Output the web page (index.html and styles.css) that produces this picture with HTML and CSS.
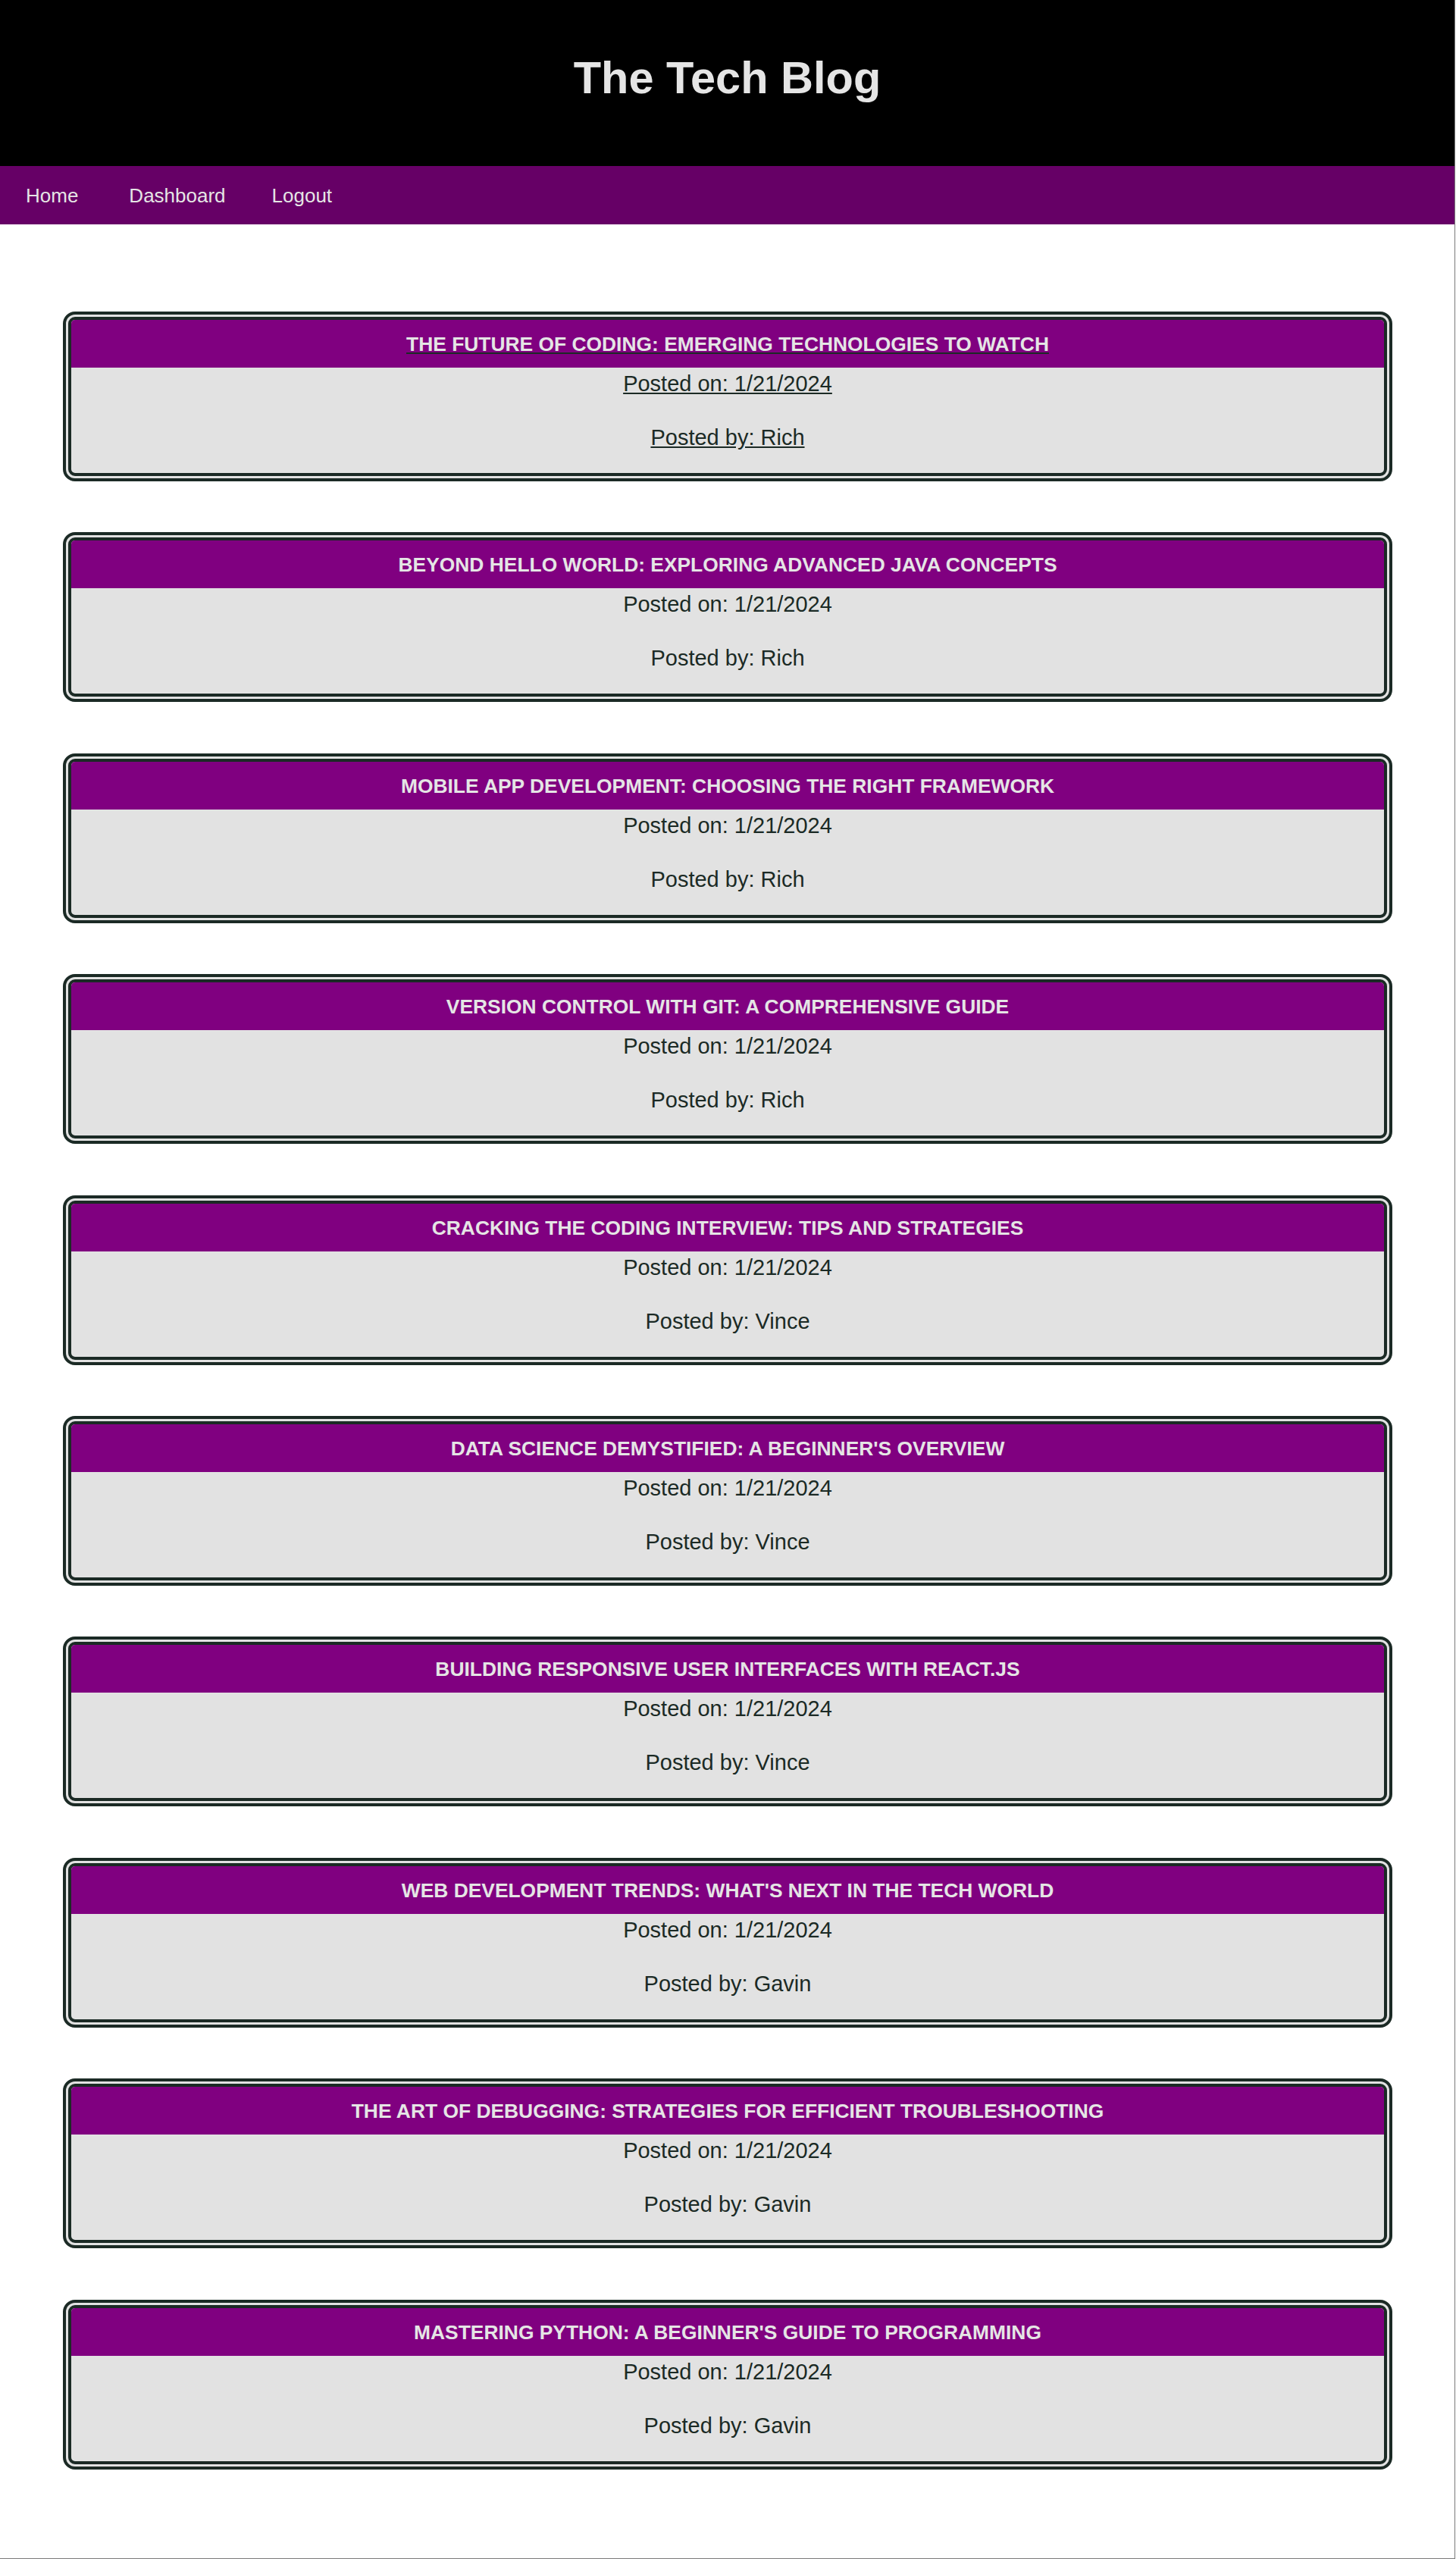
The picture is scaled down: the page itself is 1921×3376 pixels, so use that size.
FILE: index.html
```html
<!DOCTYPE html>
<html lang="en">
<head>
<meta charset="utf-8">
<title>The Tech Blog</title>
<link rel="stylesheet" href="styles.css">
</head>
<body>
<div class="page">
  <header class="site-header">
    <h1 class="site-title">The Tech Blog</h1>
  </header>
  <nav class="site-nav">
    <a class="nav-link nav-home" href="#">Home</a>
    <a class="nav-link nav-dash" href="#">Dashboard</a>
    <a class="nav-link nav-logout" href="#">Logout</a>
  </nav>
  <main class="posts">
    <a class="post-card is-hover" href="#">
      <h2 class="post-title">The Future of Coding: Emerging Technologies to Watch</h2>
      <div class="post-body"><p class="post-date">Posted on: 1/21/2024</p><p class="post-author">Posted by: Rich</p></div>
    </a>
    <a class="post-card" href="#">
      <h2 class="post-title">Beyond Hello World: Exploring Advanced Java Concepts</h2>
      <div class="post-body"><p class="post-date">Posted on: 1/21/2024</p><p class="post-author">Posted by: Rich</p></div>
    </a>
    <a class="post-card" href="#">
      <h2 class="post-title">Mobile App Development: Choosing the Right Framework</h2>
      <div class="post-body"><p class="post-date">Posted on: 1/21/2024</p><p class="post-author">Posted by: Rich</p></div>
    </a>
    <a class="post-card" href="#">
      <h2 class="post-title">Version Control with Git: A Comprehensive Guide</h2>
      <div class="post-body"><p class="post-date">Posted on: 1/21/2024</p><p class="post-author">Posted by: Rich</p></div>
    </a>
    <a class="post-card" href="#">
      <h2 class="post-title">Cracking the Coding Interview: Tips and Strategies</h2>
      <div class="post-body"><p class="post-date">Posted on: 1/21/2024</p><p class="post-author">Posted by: Vince</p></div>
    </a>
    <a class="post-card" href="#">
      <h2 class="post-title">Data Science Demystified: A Beginner's Overview</h2>
      <div class="post-body"><p class="post-date">Posted on: 1/21/2024</p><p class="post-author">Posted by: Vince</p></div>
    </a>
    <a class="post-card" href="#">
      <h2 class="post-title">Building Responsive User Interfaces with React.js</h2>
      <div class="post-body"><p class="post-date">Posted on: 1/21/2024</p><p class="post-author">Posted by: Vince</p></div>
    </a>
    <a class="post-card" href="#">
      <h2 class="post-title">Web Development Trends: What's Next in the Tech World</h2>
      <div class="post-body"><p class="post-date">Posted on: 1/21/2024</p><p class="post-author">Posted by: Gavin</p></div>
    </a>
    <a class="post-card" href="#">
      <h2 class="post-title">The Art of Debugging: Strategies for Efficient Troubleshooting</h2>
      <div class="post-body"><p class="post-date">Posted on: 1/21/2024</p><p class="post-author">Posted by: Gavin</p></div>
    </a>
    <a class="post-card" href="#">
      <h2 class="post-title">Mastering Python: A Beginner's Guide to Programming</h2>
      <div class="post-body"><p class="post-date">Posted on: 1/21/2024</p><p class="post-author">Posted by: Gavin</p></div>
    </a>
  </main>
</div>
</body>
</html>
```
FILE: styles.css
```css
html, body {
  margin: 0;
  padding: 0;
  background: #ffffff;
}

body {
  font-family: "Liberation Sans", Arial, sans-serif;
}

.page {
  width: 1920px;
  min-height: 3376px;
  box-sizing: border-box;
  border-right: 1px solid #7a7a7a;
  border-bottom: 1px solid #7a7a7a;
  display: flex;
  flex-direction: column;
}

.site-header {
  background: #000000;
  height: 219px;
  box-sizing: border-box;
  padding-top: 68px;
}

.site-title {
  margin: 0;
  text-align: center;
  color: #e5e5e5;
  font-size: 59.5px;
  line-height: 69px;
  font-weight: bold;
}

.site-nav {
  background: #660066;
  height: 77px;
  display: flex;
  align-items: center;
}

.nav-link {
  color: #e5e5e5;
  font-size: 26px;
  line-height: 30px;
  text-decoration: none;
}

.nav-home { margin-left: 34px; }
.nav-dash { margin-left: 67px; }
.nav-logout { margin-left: 61px; }

.posts {
  flex: 1;
  display: flex;
  flex-direction: column;
  gap: 67.4px;
  padding: 115px 82px 0 83px;
}

.post-card {
  display: block;
  border: 11px double #1b2a25;
  border-radius: 16px;
  background: #e2e2e2;
  overflow: hidden;
  color: #1b2a25;
  text-decoration: none;
  text-align: center;
}

.post-card.is-hover {
  text-decoration: underline;
}

.post-title {
  margin: 0;
  background: #800080;
  color: #e5e5e5;
  font-size: 26.4px;
  line-height: 30px;
  font-weight: bold;
  text-transform: uppercase;
  padding: 17px 0 16px;
}

.post-body {
  padding: 4px 0 30px;
  font-size: 29px;
  line-height: 34px;
}

.post-body p {
  margin: 0;
}

.post-author {
  margin-top: 37px !important;
}
```
